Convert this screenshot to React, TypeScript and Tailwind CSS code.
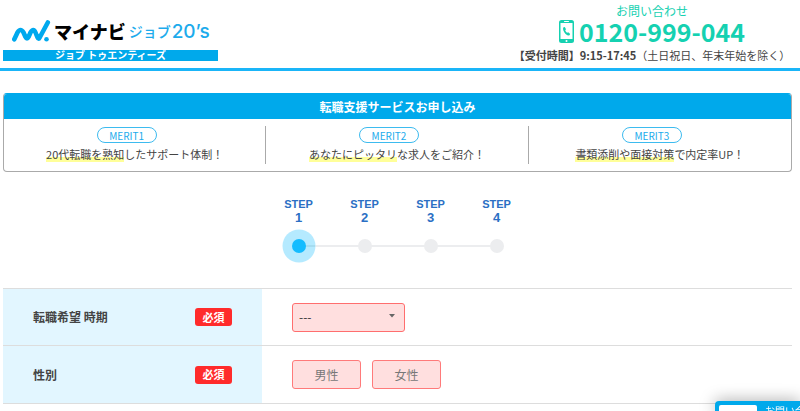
import { useState } from "react";

const merits = [
    { label: "MERIT1", marked: "20代転職を熟知", rest: "したサポート体制！" },
    { label: "MERIT2", marked: "あなたにピッタリ", rest: "な求人をご紹介！" },
    { label: "MERIT3", marked: "書類添削や面接対策", rest: "で内定率UP！" },
];

const steps = [1, 2, 3, 4];
const genders = ["男性", "女性"];

function Logo() {
    return (
        <a href="#" className="block w-[215px]">
            <div className="mb-1 flex h-[30px] items-center pl-[9px]">
                <svg width="39" height="24" viewBox="0 0 39 24" fill="none" aria-hidden="true">
                    <path
                        d="M2.300 20.300 L5.500 13.500 Q8.500 8.500 11.500 13.500 L13.500 18 Q15 21 16.500 18 L18.500 13.500 Q21.500 8.500 23.500 13.500 L25.500 18.500 Q26.500 21 27.700 18.500 L35.800 3.500"
                        stroke="#00a9ee"
                        strokeWidth="4.600"
                        strokeLinecap="round"
                        strokeLinejoin="round"
                    />
                    <circle cx="34.500" cy="20.200" r="2.300" fill="#00a9ee" />
                </svg>
                <span className="ml-[3px] text-lg leading-none font-black text-black">マイナビ</span>
                <span className="ml-[3px] text-sm leading-none font-medium text-[#1cabec]">ジョブ</span>
                <span className="ml-px font-['Inter',sans-serif] text-[19px] leading-none font-medium text-[#1cabec]">
                    20’s
                </span>
            </div>
            <p className="h-[11px] bg-[#00a9eb] text-center text-[10px] leading-[10px] font-bold text-white">
                ジョブ トゥエンティーズ
            </p>
        </a>
    );
}

function PhoneIcon() {
    return (
        <svg width="15" height="23" viewBox="0 0 15 23" aria-hidden="true">
            <rect x="0" y="0" width="15" height="23" rx="2.500" fill="#15d1b1" />
            <rect x="1.500" y="3" width="12" height="16" fill="#fff" />
            <rect x="5" y="1" width="5" height="1" rx="0.500" fill="#fff" />
            <circle cx="7.500" cy="21" r="1" fill="#fff" />
            <path
                d="M4.200 7.500 L5.800 7 L7 9.300 L6.200 10.200 Q6.800 11.800 8.100 12.700 L9.200 12.200 L11.200 14 L10.200 15.400 Q8.800 15.800 6.600 13.900 Q3.400 10.500 4.200 7.500Z"
                fill="#15d1b1"
            />
        </svg>
    );
}

function Required() {
    return (
        <span className="flex h-[18px] w-[37px] items-center justify-center rounded-[3px] bg-[#ff2b2b] text-[11px] font-bold text-white">
            必須
        </span>
    );
}

export default function App() {
    const [gender, setGender] = useState("");

    return (
        <div className="bg-white font-['Noto_Sans_CJK_JP',sans-serif] text-[#444]">
            <header className="flex items-start justify-between border-b-[3px] border-[#1ab5f8] pr-2 pl-[3px]">
                <div className="pt-4 pb-[7px]">
                    <Logo />
                </div>
                <div className="w-[280px] pt-[3px] text-center">
                    <p className="text-xs leading-4 text-[#15d1b1]">お問い合わせ</p>
                    <p className="flex h-6 items-center justify-center gap-[5px] text-[25px] leading-none font-bold text-[#15d1b1]">
                        <PhoneIcon />
                        0120-999-044
                    </p>
                    <p className="text-[11px] leading-6 whitespace-nowrap">
                        <b>【受付時間】9:15-17:45</b>（土日祝日、年末年始を除く）
                    </p>
                </div>
            </header>

            <main className="mt-[22px] mr-2 ml-[3px]">
                <section className="overflow-hidden rounded-[4px] border border-[#aaa] border-t-[#00a9eb]">
                    <h1 className="bg-[#00a9eb] text-center text-xs leading-[25px] font-bold text-white">
                        転職支援サービスお申し込み
                    </h1>
                    <ul className="grid grid-cols-3 divide-x divide-[#aaa] py-[7px]">
                        {merits.map((merit) => (
                            <li key={merit.label} className="flex h-[38px] flex-col items-center">
                                <span className="mt-px mr-4 flex h-4 w-[60px] items-center justify-center rounded-full border border-[#3dbbef] text-[10px] text-[#1cabec]">
                                    {merit.label}
                                </span>
                                <p className="mt-[3px] text-[11px] leading-4">
                                    <span className="bg-linear-to-t from-[#ffff99] from-30% to-transparent to-30%">
                                        {merit.marked}
                                    </span>
                                    {merit.rest}
                                </p>
                            </li>
                        ))}
                    </ul>
                </section>

                <ol className="mx-auto mt-[25px] grid w-[264px] grid-cols-4 text-center font-['Liberation_Sans',sans-serif] font-bold text-[#2b6fc4]">
                    {steps.map((step) => (
                        <li key={step}>
                            <p className="text-[11px] leading-[14px]">STEP</p>
                            <p className="text-[13px] leading-[14px]">{step}</p>
                        </li>
                    ))}
                </ol>
                <svg className="mx-auto mt-1 block" width="264" height="34" viewBox="0 0 264 34" aria-hidden="true">
                    <path d="M33 17H231" stroke="#ecedef" strokeWidth="2" />
                    {steps.map((step) => (
                        <circle key={step} cx={step * 66 - 33} cy="17" r="7" fill="#ecedef" />
                    ))}
                    <circle cx="33" cy="17" r="16.500" fill="#b5eaff" />
                    <path d="M33 17H49" stroke="#a5dcf0" strokeWidth="2" />
                    <circle cx="33" cy="17" r="7" fill="#14bcff" />
                </svg>

                <form className="mt-[25px] border-t border-[#ddd]">
                    <div className="flex h-[57px] border-b border-[#ddd]">
                        <div className="flex w-[259px] shrink-0 items-center justify-between bg-[#e2f6ff] px-[30px]">
                            <label htmlFor="period" className="text-xs font-bold">
                                転職希望 時期
                            </label>
                            <Required />
                        </div>
                        <div className="flex items-center pl-[30px]">
                            <div className="relative">
                                <select
                                    id="period"
                                    className="block h-[29px] w-[113px] appearance-none rounded-[3px] border border-[#ff6e6e] bg-[#ffdfdf] px-1.5 text-xs text-[#333]"
                                >
                                    <option>---</option>
                                    <option>すぐにでも</option>
                                    <option>3ヶ月以内</option>
                                </select>
                                <svg
                                    className="pointer-events-none absolute top-[11px] right-[10px]"
                                    width="6"
                                    height="4"
                                    viewBox="0 0 6 4"
                                    aria-hidden="true"
                                >
                                    <path d="M0 0H6L3 3.500Z" fill="#666" />
                                </svg>
                            </div>
                        </div>
                    </div>
                    <div className="flex h-[58px] border-b border-[#ddd]">
                        <div className="flex w-[259px] shrink-0 items-center justify-between bg-[#e2f6ff] px-[30px]">
                            <span id="gender" className="text-xs font-bold">
                                性別
                            </span>
                            <Required />
                        </div>
                        <div role="group" aria-labelledby="gender" className="flex items-center gap-[11px] pl-[30px]">
                            {genders.map((name) => (
                                <button
                                    key={name}
                                    type="button"
                                    aria-pressed={gender === name}
                                    onClick={() => setGender(name)}
                                    className="h-[29px] w-[69px] rounded-[3px] border border-[#ff7a7a] bg-[#ffdfdf] text-xs text-[#777]"
                                >
                                    {name}
                                </button>
                            ))}
                        </div>
                    </div>
                </form>
            </main>

            <aside className="fixed right-0 bottom-0 flex h-[10px] w-[85px] gap-2 rounded-tl-[4px] bg-[#00a9eb] pt-1 pl-1 shadow-[0_0_16px_rgba(0,0,0,0.4)]">
                <div className="w-[38px] shrink-0 rounded-t-[2px] bg-white" />
                <p className="overflow-hidden text-[10px] leading-3 whitespace-nowrap text-white">お問い合わせ</p>
            </aside>
        </div>
    );
}
